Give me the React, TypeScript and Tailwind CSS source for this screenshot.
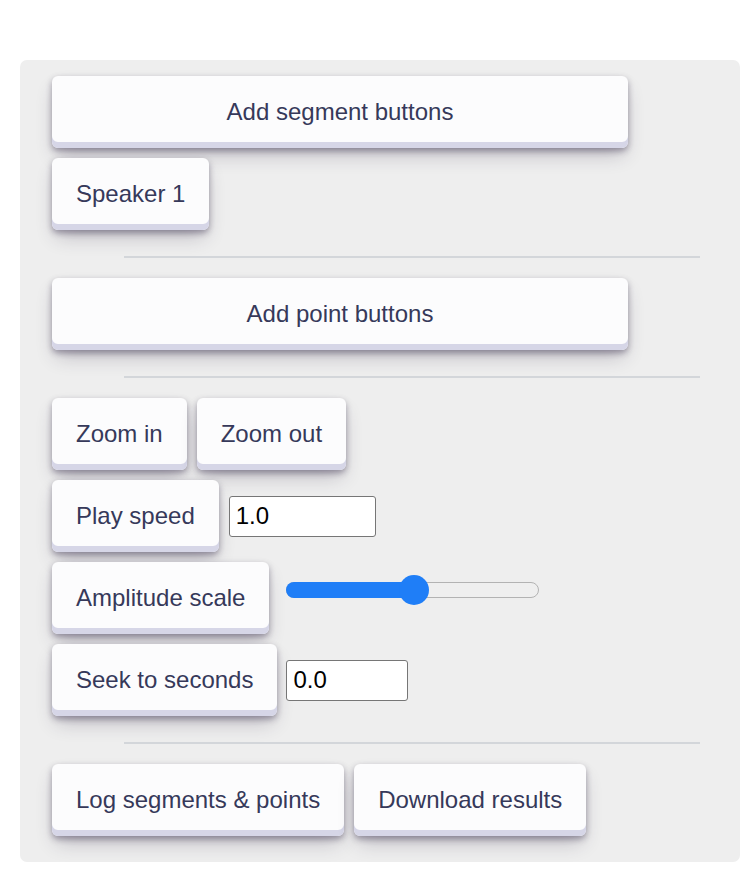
import React, { useState } from "react";

/* Panel de controles del editor de forma de onda */

const btn =
  "h-[72px] shrink-0 rounded-[6px] bg-[#FCFCFD] px-6 text-[24px] leading-none text-[#36395A] whitespace-nowrap shadow-[0_3px_6px_rgba(45,35,66,0.4),0_10px_20px_-5px_rgba(45,35,66,0.3),inset_0_-6px_0_#D6D6E7] hover:shadow-[0_4px_8px_rgba(45,35,66,0.4),0_12px_22px_-5px_rgba(45,35,66,0.3),inset_0_-6px_0_#D6D6E7]";

const field =
  "h-[41px] rounded-[3px] border border-[#767676] bg-white pl-[6px] text-[24px] text-black outline-none";

function Separator() {
  return <div className="mb-[20px] ml-[72px] mt-[26px] h-[2px] w-[576px] bg-[#d3d6da]" />;
}

export default function App() {
  const [speed, setSpeed] = useState("1.0");
  const [seek, setSeek] = useState("0.0");
  const [amp, setAmp] = useState(50.5);

  return (
    <div
      className="min-h-[896px] bg-white pl-[20px] pt-[60px]"
      style={{ fontFamily: '"Liberation Sans", Arial, Helvetica, sans-serif' }}
    >
      <div className="flex w-[720px] flex-col rounded-[7px] bg-[#eeeeee] px-[32px] pb-[26px] pt-[16px]">
        {/* Segmentos */}
        <button type="button" className={`${btn} w-[576px]`}>
          Add segment buttons
        </button>
        <div className="mt-[10px] flex">
          <button type="button" className={btn}>
            Speaker 1
          </button>
        </div>

        <Separator />

        {/* Puntos */}
        <button type="button" className={`${btn} w-[576px]`}>
          Add point buttons
        </button>

        <Separator />

        {/* Zoom y reproducción */}
        <div className="flex gap-[10px]">
          <button type="button" className={btn}>
            Zoom in
          </button>
          <button type="button" className={btn}>
            Zoom out
          </button>
        </div>

        <div className="mt-[10px] flex items-center">
          <button type="button" className={btn}>
            Play speed
          </button>
          <input
            aria-label="Play speed"
            value={speed}
            onChange={(e) => setSpeed(e.target.value)}
            className={`${field} ml-[10px] w-[147px]`}
          />
        </div>

        <div className="mt-[10px] flex items-start">
          <button type="button" className={btn}>
            Amplitude scale
          </button>
          {/* Slider */}
          <div
            className="relative ml-[17px] mt-[13px] h-[30px] w-[253px] cursor-pointer"
            onClick={(e) => {
              const r = e.currentTarget.getBoundingClientRect();
              setAmp(Math.round(((e.clientX - r.left) / r.width) * 100));
            }}
          >
            <div className="absolute left-0 right-0 top-[7px] h-[16px] rounded-full border border-[#b3b3b3] bg-[#efefef]" />
            <div
              className="absolute left-0 top-[7px] h-[16px] rounded-full bg-[#1f7ef7]"
              style={{ width: `${amp}%` }}
            />
            <div
              className="absolute top-0 h-[30px] w-[30px] -translate-x-1/2 rounded-full bg-[#1f7ef7]"
              style={{ left: `${amp}%` }}
            />
          </div>
        </div>

        <div className="mt-[10px] flex items-center">
          <button type="button" className={btn}>
            Seek to seconds
          </button>
          <input
            aria-label="Seek to seconds"
            value={seek}
            onChange={(e) => setSeek(e.target.value)}
            className={`${field} ml-[9px] w-[122px]`}
          />
        </div>

        <Separator />

        {/* Resultados */}
        <div className="flex gap-[10px]">
          <button type="button" className={btn}>
            Log segments &amp; points
          </button>
          <button type="button" className={btn}>
            Download results
          </button>
        </div>
      </div>
    </div>
  );
}
